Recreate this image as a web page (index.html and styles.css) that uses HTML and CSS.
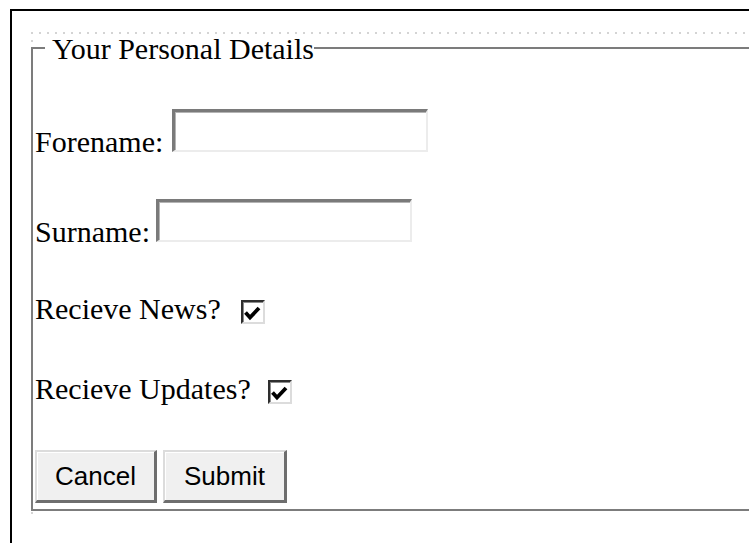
FILE: index.html
```html
<!DOCTYPE html>
<html lang="en">
<head>
<meta charset="utf-8">
<title>Your Personal Details</title>
<link rel="stylesheet" href="styles.css">
</head>
<body>
<div class="frame">
  <form class="form-area">
    <fieldset class="details">
      <legend class="details-title">Your Personal Details</legend>

      <div class="row text-row row-fore">
        <label class="label" for="forename">Forename:</label>
        <input class="field" id="forename" type="text">
      </div>

      <div class="row text-row row-sur">
        <label class="label" for="surname">Surname:</label>
        <input class="field" id="surname" type="text">
      </div>

      <div class="row check-row row-news">
        <span class="label">Recieve News?</span>
        <span class="check check-news" role="checkbox" aria-checked="true">
          <svg viewBox="0 0 20 20" width="20" height="20"><path d="M2.5 10.5 L7 15.5 L16 6"/></svg>
        </span>
      </div>

      <div class="row check-row row-updates">
        <span class="label">Recieve Updates?</span>
        <span class="check check-updates" role="checkbox" aria-checked="true">
          <svg viewBox="0 0 20 20" width="20" height="20"><path d="M2.5 10.5 L7 15.5 L16 6"/></svg>
        </span>
      </div>

      <div class="actions">
        <button class="btn" type="button">Cancel</button>
        <button class="btn" type="submit">Submit</button>
      </div>
    </fieldset>
  </form>
</div>
</body>
</html>
```
FILE: styles.css
```css
html, body {
  margin: 0;
  height: 100%;
  overflow: hidden;
  background: #fff;
  color: #000;
}

/* black-edged outer panel */
.frame {
  box-sizing: border-box;
  height: calc(100% - 9px);
  margin: 9px 0 0 10px;
  border-top: 2px solid #000;
  border-left: 2px solid #000;
  padding: 20px 0 0 19px;
}

/* form area with dotted top and left edges */
.form-area {
  margin: 0;
  padding: 0 0 6px 0;
  background:
    linear-gradient(to right, #d4d4d4 2px, transparent 2px) 0 0 / 8px 2px repeat-x,
    linear-gradient(to bottom, #d4d4d4 2px, transparent 2px) 0 0 / 2px 8px repeat-y;
}

.details {
  margin: 1px 0 0 0;
  padding: 0 0 6px 2px;
  min-width: 0;
  border: 2px solid #7c7c7c;
  border-right: none;
  font-family: "Liberation Serif", "Times New Roman", serif;
  font-size: 30px;
}

.details-title {
  margin-left: 10px;
  padding: 2px 0 0 7px;
  font-size: 30px;
  line-height: 30px;
}

.row {
  display: flex;
  align-items: flex-end;
}

.label {
  line-height: 30px;
  white-space: pre;
}

.row-fore { margin-top: 45px; }
.row-sur { margin-top: 42px; }
.row-news { margin-top: 47px; }
.row-updates { margin-top: 50px; }

/* sunken text boxes */
.field {
  box-sizing: border-box;
  width: 256px;
  height: 43px;
  margin: 0 0 5px 0;
  padding: 0;
  border-style: solid;
  border-width: 3px 2px 2px 3px;
  border-color: #7a7a7a #ececec #ececec #7a7a7a;
  box-shadow: inset 1px 1px 0 #b4b4b4;
  background: #fff;
  font: 26px "Liberation Sans", Arial, sans-serif;
  outline: none;
}

#forename { margin-left: 9px; }
#surname { margin-left: 6px; }

/* sunken checked boxes */
.check {
  box-sizing: border-box;
  display: flex;
  align-items: center;
  justify-content: center;
  width: 24px;
  height: 24px;
  border-style: solid;
  border-width: 2px;
  border-color: #2e2e2e #dcdcdc #dcdcdc #2e2e2e;
  box-shadow: inset 1px 1px 0 #8c8c8c;
  background: #fff;
}

.check svg path {
  fill: none;
  stroke: #000;
  stroke-width: 3.8;
  stroke-linejoin: miter;
  stroke-linecap: butt;
}

.check-news { margin-left: 20px; }
.check-updates { margin-left: 17px; }

.actions {
  display: flex;
  gap: 6px;
  margin-top: 46px;
}

/* raised push buttons */
.btn {
  box-sizing: border-box;
  height: 53px;
  width: 122px;
  margin: 0;
  padding: 0;
  border-style: solid;
  border-width: 2px 3px 3px 2px;
  border-color: #dcdcdc #6e6e6e #6e6e6e #dcdcdc;
  box-shadow: inset 1px 1px 0 #ffffff;
  background: #f0f0f0;
  color: #000;
  font: 26px "Liberation Sans", Arial, sans-serif;
}

.btn + .btn { width: 124px; }
```
